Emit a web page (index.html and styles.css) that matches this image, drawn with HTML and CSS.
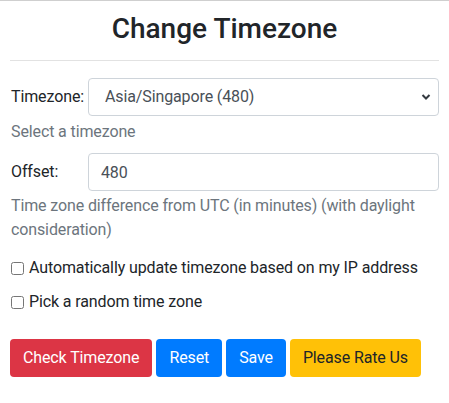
FILE: index.html
```html
<!DOCTYPE html>
<html>
<head>
<meta charset="utf-8">
<link rel="stylesheet" href="styles.css">
</head>
<body>
<div class="page">
  <h3 class="title">Change Timezone</h3>
  <hr class="divider">
  <div class="field">
    <label class="field-label" for="tz">Timezone:</label>
    <div class="select-wrap">
      <select id="tz" class="control select">
        <option>Asia/Singapore (480)</option>
      </select>
      <svg class="chevron" width="10" height="8" viewBox="0 0 10 8"><path d="M1.5 2 L5 5.5 L8.5 2" fill="none" stroke="#343a40" stroke-width="2"/></svg>
    </div>
  </div>
  <p class="help help-tz">Select a timezone</p>
  <div class="field field-offset">
    <label class="field-label" for="off">Offset:</label>
    <input id="off" class="control" type="text" value="480">
  </div>
  <p class="help help-offset">Time zone difference from UTC (in minutes) (with daylight consideration)</p>
  <label class="check check-first"><input type="checkbox" class="box"> Automatically update timezone based on my IP address</label>
  <label class="check"><input type="checkbox" class="box"> Pick a random time zone</label>
  <div class="actions">
    <button class="btn btn-red">Check Timezone</button>
    <button class="btn btn-blue">Reset</button>
    <button class="btn btn-blue">Save</button>
    <button class="btn btn-yellow">Please Rate Us</button>
  </div>
</div>
</body>
</html>
```
FILE: styles.css
```css
* { box-sizing: border-box; }
html, body {
  margin: 0;
  padding: 0;
  background: #fff;
}
body {
  border-top: 1px solid #cfcfcf;
  font-family: Roboto, "Liberation Sans", sans-serif;
  font-size: 16px;
  line-height: 24px;
  letter-spacing: -0.12px;
  color: #212529;
}
.page {
  padding: 11px 10px 0 10px;
}
.title {
  margin: 0;
  font-size: 28px;
  line-height: 34px;
  font-weight: 500;
  letter-spacing: 0;
  text-align: center;
}
.divider {
  border: 0;
  border-top: 1px solid #e2e2e2;
  margin: 14px 0 17px 0;
}
.field {
  display: flex;
  align-items: center;
}
.field-label {
  width: 78px;
  padding-left: 1px;
  flex: none;
}
.select-wrap {
  position: relative;
  flex: 1;
  display: flex;
}
.control {
  flex: 1;
  width: 100%;
  height: 38px;
  border: 1px solid #ced4da;
  border-radius: 4px;
  padding: 6px 12px;
  font: inherit;
  letter-spacing: inherit;
  color: #495057;
  background: #fff;
  outline: none;
}
.select {
  appearance: none;
  -webkit-appearance: none;
  padding-left: 16px;
}
.chevron {
  position: absolute;
  right: 8px;
  top: 15px;
  pointer-events: none;
}
.help {
  margin: 4px 0 0 1px;
  color: #6c757d;
}
.field-offset {
  margin-top: 9px;
}
.help-offset {
  margin-top: 3px;
}
.check {
  display: flex;
  align-items: center;
  margin-top: 10px;
  padding-left: 1px;
}
.check-first {
  margin-top: 14px;
}
.box {
  width: 13px;
  height: 13px;
  margin: 0 5px 0 0;
}
.actions {
  display: flex;
  gap: 4px;
  margin-top: 25px;
}
.btn {
  font: inherit;
  letter-spacing: inherit;
  border: 1px solid transparent;
  border-radius: 4px;
  padding: 6px 12px;
  line-height: 24px;
  cursor: pointer;
}
.btn-red { background: #dc3545; color: #fff; }
.btn-blue { background: #007bff; color: #fff; }
.btn-yellow { background: #ffc107; color: #212529; }
```
